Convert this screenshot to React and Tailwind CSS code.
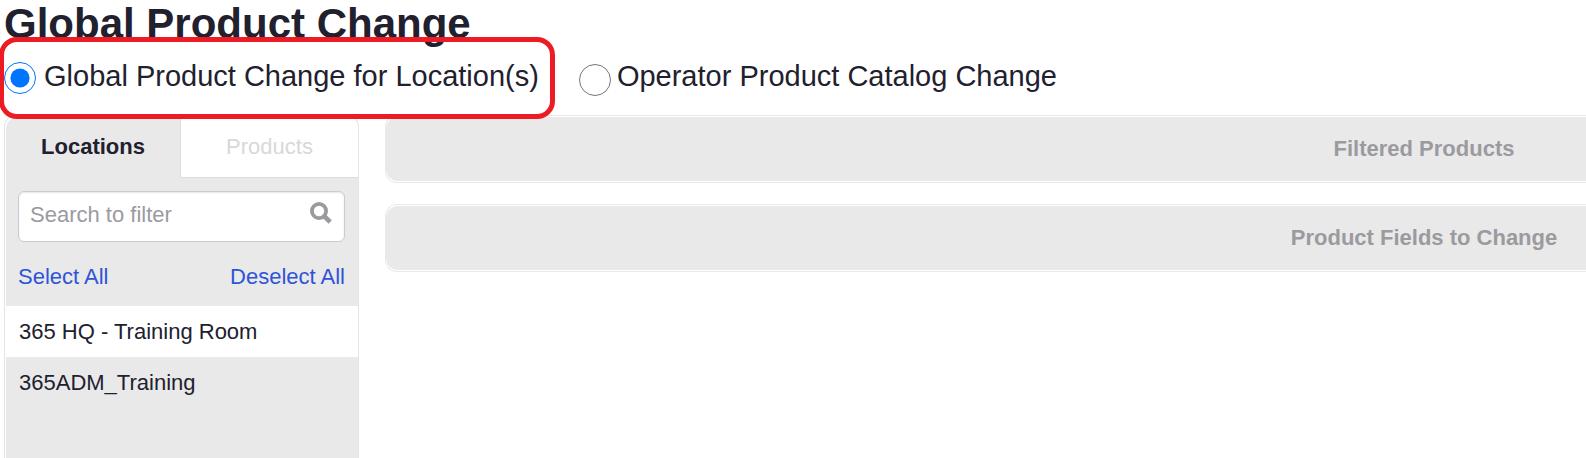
import React, { useState } from 'react';

const LOCATIONS = ['365 HQ - Training Room', '365ADM_Training'];

const SearchIcon = () => (
    <svg className="h-[22px] w-[22px] shrink-0" viewBox="0 0 22 22" fill="none" stroke="#9b9a9f" aria-hidden="true">
        <circle cx="9" cy="9" r="7.1" strokeWidth="3.8" />
        <path d="M14 14L20.2 20" strokeWidth="4.6" />
    </svg>
);

// The panels run on past the right edge of the page
const Panel = ({ title }) => (
    <section className="rounded-l-xl border border-r-0 border-[#e9e9e9] py-px">
        <h2 className="flex justify-end rounded-l-xl bg-[#e9e9e9] py-4 text-[22px] leading-8 font-bold text-[#9b9a9f]">
            <span className="w-[324px] text-center">{title}</span>
        </h2>
    </section>
);

const GlobalProductChange = () => {
    const [mode, setMode] = useState('location');
    const [tab, setTab] = useState('locations');
    const [search, setSearch] = useState('');
    const [selected, setSelected] = useState([]);

    const visible = LOCATIONS.filter((name) => name.toLowerCase().includes(search.toLowerCase()));

    const toggle = (name) => {
        setSelected(selected.includes(name) ? selected.filter((n) => n !== name) : [...selected, name]);
    };

    return (
        <div className="flex h-screen flex-col overflow-hidden bg-white pl-1 font-['Liberation_Sans',Arial,sans-serif] text-[22px] text-[#21202e]">
            <h1 className="text-[42px] leading-[48px] font-bold">Global Product Change</h1>

            <div className="flex gap-10 pt-3 text-[29px] leading-8">
                <label className="relative flex gap-2">
                    <input
                        type="radio"
                        name="mode"
                        className="mt-0.5 size-8"
                        checked={mode === 'location'}
                        onChange={() => setMode('location')}
                    />
                    Global Product Change for Location(s)
                    <span className="pointer-events-none absolute -top-[23px] -right-4 -bottom-[23px] -left-[5px] rounded-[18px] border-5 border-[#ed1c24]" />
                </label>
                <label className="flex gap-1.5">
                    <input
                        type="radio"
                        name="mode"
                        className="mt-1 size-8"
                        checked={mode === 'catalog'}
                        onChange={() => setMode('catalog')}
                    />
                    Operator Product Catalog Change
                </label>
            </div>

            <div className="flex grow gap-[26px] pt-[19px]">
                <aside className="flex w-[355px] shrink-0 flex-col rounded-t-xl border border-b-0 border-[#e5e5e5] pt-px pl-px">
                    <div className="flex text-center leading-8" role="tablist">
                        <button
                            type="button"
                            role="tab"
                            aria-selected={tab === 'locations'}
                            onClick={() => setTab('locations')}
                            className="w-[175px] rounded-tl-xl border-r border-[#dcdcdc] bg-[#e9e9e9] pt-[14px] pb-[15px] font-bold"
                        >
                            Locations
                        </button>
                        <button
                            type="button"
                            role="tab"
                            aria-selected={tab === 'products'}
                            onClick={() => setTab('products')}
                            className="flex-1 border-b border-[#dcdcdc] pt-[14px] pb-[14px] text-[#d8d8d8]"
                        >
                            Products
                        </button>
                    </div>

                    <div className="grow bg-[#e9e9e9]">
                        <div className="pt-[13px] pr-[13px] pb-[13px] pl-3">
                            <div className="flex h-[51px] items-start rounded-md border border-[#cccccc] bg-white pt-[10px] pr-3 pl-[11px] shadow-[inset_0_1px_2px_rgba(0,0,0,0.1)]">
                                <input
                                    type="text"
                                    aria-label="Search to filter"
                                    placeholder="Search to filter"
                                    value={search}
                                    onChange={(e) => setSearch(e.target.value)}
                                    className="min-w-0 flex-1 leading-[26px] outline-none placeholder:text-[#9b9a9f]"
                                />
                                <SearchIcon />
                            </div>
                            <div className="flex justify-between pt-[19px] leading-8 text-[#2f54d8]">
                                <a href="#select" onClick={() => setSelected(LOCATIONS)}>Select All</a>
                                <a href="#deselect" onClick={() => setSelected([])}>Deselect All</a>
                            </div>
                        </div>

                        <ul>
                            {visible.map((name) => (
                                <li
                                    key={name}
                                    onClick={() => toggle(name)}
                                    className={`px-[13px] pt-[10px] pb-[9px] leading-8 odd:bg-white ${selected.includes(name) ? 'font-bold' : ''}`}
                                >
                                    {name}
                                </li>
                            ))}
                        </ul>
                    </div>
                </aside>

                <main className="flex min-w-0 grow flex-col gap-[21px]">
                    <Panel title="Filtered Products" />
                    <Panel title="Product Fields to Change" />
                </main>
            </div>
        </div>
    );
};

export default GlobalProductChange;
